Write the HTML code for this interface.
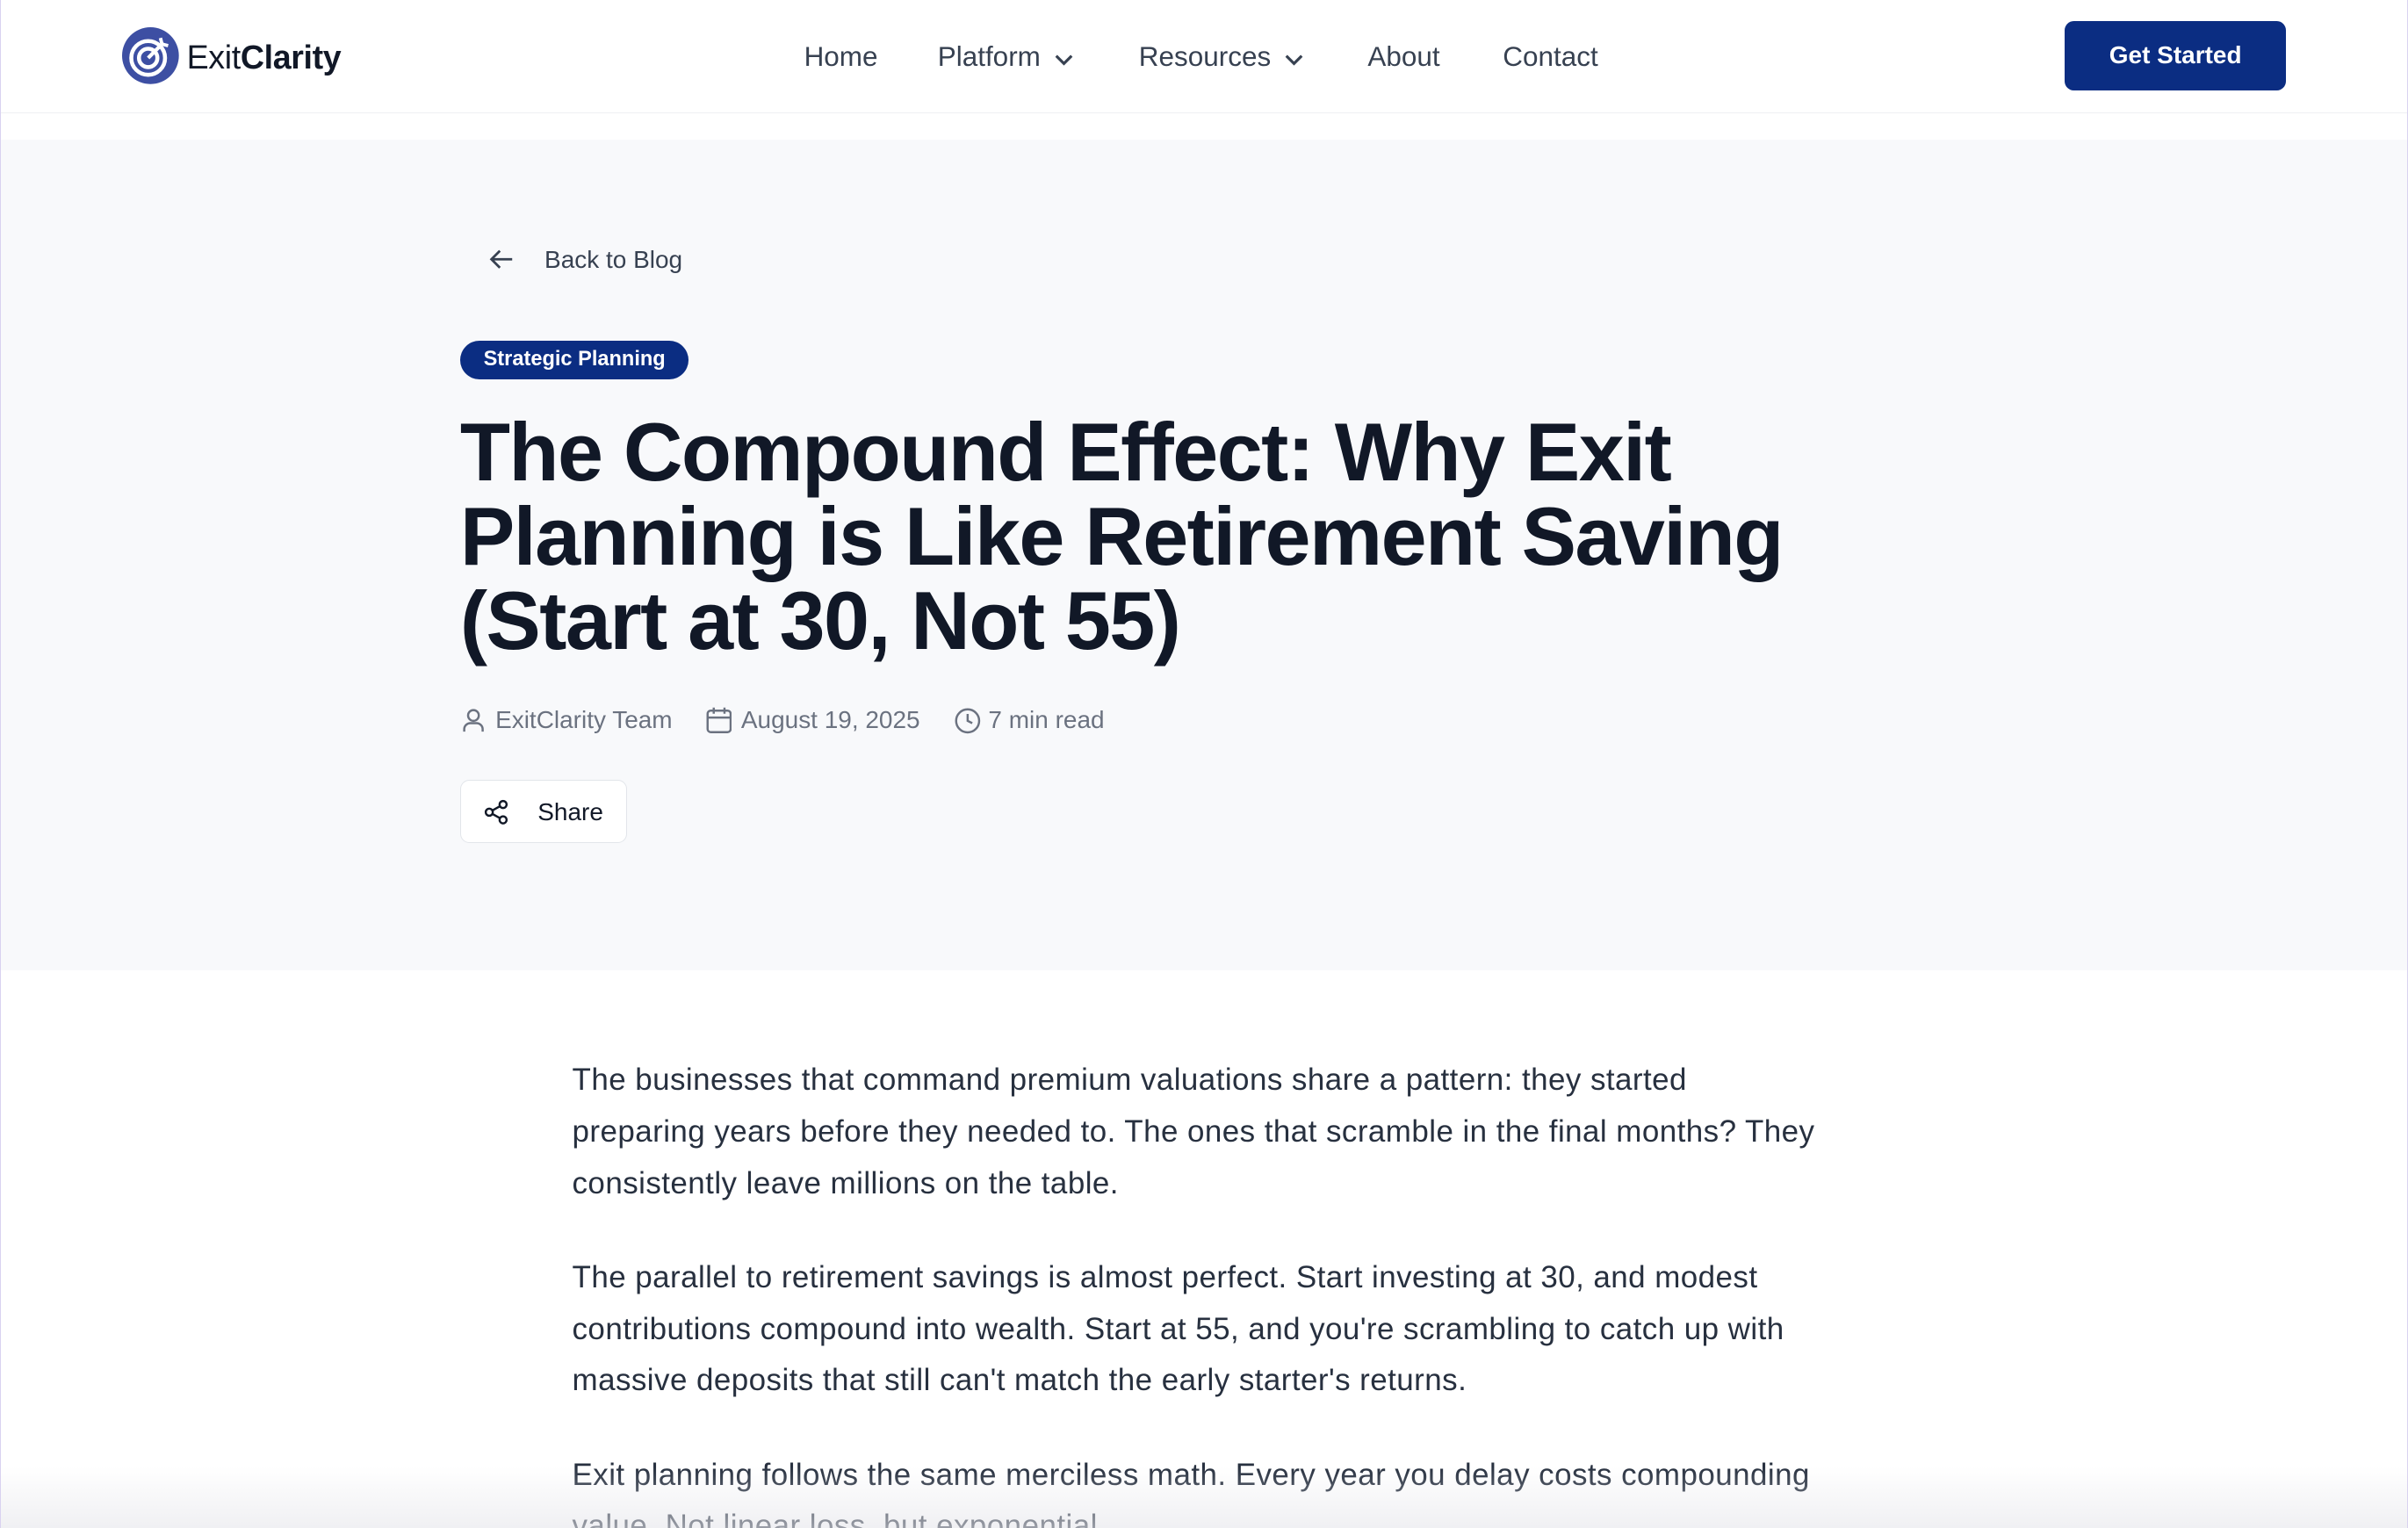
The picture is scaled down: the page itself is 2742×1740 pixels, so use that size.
<!DOCTYPE html>
<html><head><meta charset="utf-8"><style>
html,body{margin:0;padding:0;background:#fff;overflow:hidden}
body{width:2742px;height:1740px}
#w{zoom:1.74872;width:1568px;height:995px;position:relative;font-family:"Liberation Sans",sans-serif;overflow:hidden;border-left:1px solid #d9d2f0;border-right:1px solid #d9d2f0;box-sizing:border-box}
.nav{position:absolute;left:0;top:0;width:1568px;height:73px;border-bottom:1px solid #eef0f3;background:#fff}
.logo{position:absolute;left:79px;top:18px}
.logotxt{position:absolute;left:121px;top:25px;font-size:21.5px;color:#111827;letter-spacing:-0.2px}
.nl{position:absolute;top:27px;font-size:18px;color:#374151}
.btn{position:absolute;left:1344px;top:14px;width:144px;height:45px;background:#0b2d82;border-radius:6px;color:#fff;font-weight:bold;font-size:16px;text-align:center;line-height:45px}
.hero{position:absolute;left:0;top:91px;width:1568px;height:541px;background:#f8f9fb}
.back{position:absolute;left:354px;top:160px;font-size:16px;color:#374151}
.badge{position:absolute;left:299px;top:222px;width:149px;height:25px;border-radius:13px;background:#0b2d82;color:#fff;font-weight:bold;font-size:13.5px;text-align:center;line-height:25px}
h1{position:absolute;left:299px;top:267px;margin:0;font-size:53.5px;line-height:55px;font-weight:bold;color:#111827;letter-spacing:-0.9px;width:885px}
.meta{position:absolute;top:460px;font-size:16px;color:#6b7280}
.share{position:absolute;left:299px;top:508px;width:109px;height:41px;background:#fff;border:1px solid #e2e5ea;border-radius:6px;box-sizing:border-box}
.share span{position:absolute;left:50px;top:11px;font-size:16px;color:#111827}
.body{position:absolute;left:372px;top:687px;width:815px;font-size:20px;line-height:33.5px;color:#27303f;letter-spacing:0.25px}
.body p{margin:0 0 28px}
.fade{position:absolute;left:0;top:955px;width:1568px;height:40px;background:linear-gradient(rgba(255,255,255,0),rgba(230,230,235,.6))}
</style></head><body><div id="w">
<div class="nav">
<svg class="logo" width="37" height="37" viewBox="0 0 37 37"><circle cx="18.5" cy="18.5" r="18.5" fill="#3d4fa3"/><circle cx="17" cy="20" r="11" fill="none" stroke="#fff" stroke-width="2.6"/><circle cx="17" cy="20" r="6" fill="none" stroke="#fff" stroke-width="2.6"/><path d="M17 20 L27 10" stroke="#fff" stroke-width="2.4"/><path d="M25 7 L26 11 L30 12" fill="none" stroke="#fff" stroke-width="2.2"/></svg>
<div class="logotxt">Exit<b>Clarity</b></div>
<div class="nl" style="left:523px">Home</div>
<div class="nl" style="left:610px">Platform <svg width="12" height="8" viewBox="0 0 12 8" style="margin-left:4px"><path d="M1 1.5l5 5 5-5" fill="none" stroke="#374151" stroke-width="1.8"/></svg></div>
<div class="nl" style="left:741px">Resources <svg width="12" height="8" viewBox="0 0 12 8" style="margin-left:4px"><path d="M1 1.5l5 5 5-5" fill="none" stroke="#374151" stroke-width="1.8"/></svg></div>
<div class="nl" style="left:890px">About</div>
<div class="nl" style="left:978px">Contact</div>
<div class="btn">Get Started</div>
</div>
<div class="hero"></div>
<svg style="position:absolute;left:318px;top:162px" width="16" height="14" viewBox="0 0 16 14"><path d="M15 7H2M7 1.5L1.5 7 7 12.5" fill="none" stroke="#374151" stroke-width="1.6"/></svg>
<div class="back">Back to Blog</div>
<div class="badge">Strategic Planning</div>
<h1>The Compound Effect: Why Exit Planning is Like Retirement Saving (Start at 30, Not 55)</h1>
<svg style="position:absolute;left:300px;top:461px" width="15" height="16" viewBox="0 0 15 16"><circle cx="7.5" cy="5" r="3.5" fill="none" stroke="#6b7280" stroke-width="1.4"/><path d="M1.5 15.5v-1.5a4 4 0 0 1 4-4h4a4 4 0 0 1 4 4v1.5" fill="none" stroke="#6b7280" stroke-width="1.4"/></svg>
<div class="meta" style="left:322px">ExitClarity Team</div>
<svg style="position:absolute;left:459px;top:460px" width="17" height="18" viewBox="0 0 17 18"><rect x="1" y="3" width="15" height="14" rx="2" fill="none" stroke="#6b7280" stroke-width="1.4"/><path d="M1 7.5h15M5 1v4M12 1v4" stroke="#6b7280" stroke-width="1.4"/></svg>
<div class="meta" style="left:482px">August 19, 2025</div>
<svg style="position:absolute;left:621px;top:461px" width="17" height="17" viewBox="0 0 17 17"><circle cx="8.5" cy="8.5" r="7.5" fill="none" stroke="#6b7280" stroke-width="1.4"/><path d="M8.5 4v4.5l3 1.5" fill="none" stroke="#6b7280" stroke-width="1.4"/></svg>
<div class="meta" style="left:643px">7 min read</div>
<div class="share"><svg style="position:absolute;left:15px;top:12px" width="17" height="17" viewBox="0 0 17 17"><circle cx="12.5" cy="3.5" r="2.3" fill="none" stroke="#111827" stroke-width="1.4"/><circle cx="3.5" cy="8.5" r="2.3" fill="none" stroke="#111827" stroke-width="1.4"/><circle cx="12.5" cy="13.5" r="2.3" fill="none" stroke="#111827" stroke-width="1.4"/><path d="M5.5 7.4l5-2.8M5.5 9.6l5 2.8" stroke="#111827" stroke-width="1.4"/></svg><span>Share</span></div>
<div class="body">
<p>The businesses that command premium valuations share a pattern: they started<br>preparing years before they needed to. The ones that scramble in the final months? They<br>consistently leave millions on the table.</p>
<p>The parallel to retirement savings is almost perfect. Start investing at 30, and modest<br>contributions compound into wealth. Start at 55, and you're scrambling to catch up with<br>massive deposits that still can't match the early starter's returns.</p>
<p>Exit planning follows the same merciless math. Every year you delay costs compounding<br>value. Not linear loss, but exponential.</p>
</div>
<div class="fade"></div>
</div></body></html>
